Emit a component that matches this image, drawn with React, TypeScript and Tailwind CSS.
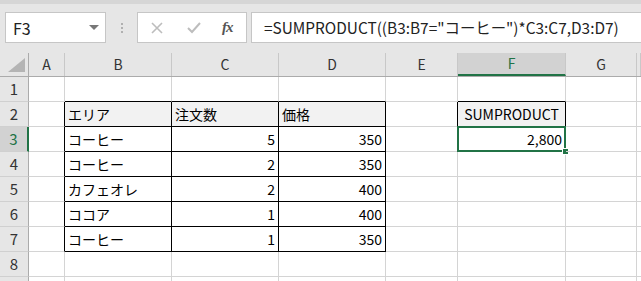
import React from 'react';

const cols = ['A', 'B', 'C', 'D', 'E', 'F', 'G', ''];
const widths = ['w-[36px]', 'w-[107px]', 'w-[107px]', 'w-[107px]', 'w-[72px]', 'w-[108px]', 'w-[71px]', 'flex-1'];

type Cell = { text?: string; align?: 'left' | 'right' | 'center'; head?: boolean; r?: boolean; b?: boolean };

// sheet content keyed by row then column index (0 = A)
const data: Record<number, Record<number, Cell>> = {
  1: { 1: { b: true }, 2: { b: true }, 3: { b: true }, 5: { b: true } },
  2: {
    0: { r: true },
    1: { text: 'エリア', head: true, r: true, b: true },
    2: { text: '注文数', head: true, r: true, b: true },
    3: { text: '価格', head: true, r: true, b: true },
    4: { r: true },
    5: { text: 'SUMPRODUCT', head: true, r: true, b: true, align: 'center' },
  },
  3: { 0: { r: true }, 1: { text: 'コーヒー', r: true, b: true }, 2: { text: '5', align: 'right', r: true, b: true }, 3: { text: '350', align: 'right', r: true, b: true }, 5: { text: '2,800', align: 'right' } },
  4: { 0: { r: true }, 1: { text: 'コーヒー', r: true, b: true }, 2: { text: '2', align: 'right', r: true, b: true }, 3: { text: '350', align: 'right', r: true, b: true } },
  5: { 0: { r: true }, 1: { text: 'カフェオレ', r: true, b: true }, 2: { text: '2', align: 'right', r: true, b: true }, 3: { text: '400', align: 'right', r: true, b: true } },
  6: { 0: { r: true }, 1: { text: 'ココア', r: true, b: true }, 2: { text: '1', align: 'right', r: true, b: true }, 3: { text: '400', align: 'right', r: true, b: true } },
  7: { 0: { r: true }, 1: { text: 'コーヒー', r: true, b: true }, 2: { text: '1', align: 'right', r: true, b: true }, 3: { text: '350', align: 'right', r: true, b: true } },
};

const justify = { left: 'justify-start', right: 'justify-end', center: 'justify-center' };

const font = { fontFamily: '"Noto Sans CJK JP", "Noto Sans", sans-serif' };

const Toolbar: React.FC = () => (
  <div className="h-[53px] bg-[#e6e6e6] border-t-4 border-[#d6d6d6] flex items-start pt-[8px] pl-[5px]">
    <div className="w-[101px] h-[31px] bg-white border border-[#c6c6c6] flex items-center justify-between pl-[7px] pr-[6px]">
      <span className="text-[16px] text-[#222]" style={font}>F3</span>
      <svg width="10" height="6" viewBox="0 0 10 6"><path d="M0 0 L10 0 L5 5 Z" fill="#777" /></svg>
    </div>
    <div className="w-[31px] h-[31px] flex flex-col items-center justify-center gap-[2px]">
      <span className="w-[2px] h-[2px] bg-[#b0b0b0]" />
      <span className="w-[2px] h-[2px] bg-[#b0b0b0]" />
      <span className="w-[2px] h-[2px] bg-[#b0b0b0]" />
    </div>
    <div className="w-[110px] h-[31px] bg-white border border-[#c6c6c6] flex items-center">
      <svg className="ml-[13px]" width="12" height="12" viewBox="0 0 12 12">
        <path d="M1 1 L11 11 M11 1 L1 11" stroke="#bdbdbd" strokeWidth="1.6" />
      </svg>
      <svg className="ml-[24px]" width="14" height="12" viewBox="0 0 14 12">
        <path d="M1 6 L5 10 L13 1" stroke="#bdbdbd" strokeWidth="2" fill="none" />
      </svg>
      <span
        className="ml-[21px] text-[15px] italic font-bold text-[#555] leading-none tracking-[-1px]"
        style={{ fontFamily: '"Liberation Serif", serif' }}
      >
        fx
      </span>
    </div>
    <div className="ml-[4px] flex-1 h-[31px] bg-white border border-[#c6c6c6] border-r-0 flex items-center pl-[12px]">
      <span className="text-[15.4px] text-[#222] whitespace-nowrap" style={font}>=SUMPRODUCT((B3:B7="コーヒー")*C3:C7,D3:D7)</span>
    </div>
  </div>
);

const App: React.FC = () => {
  return (
    <div className="w-[641px] h-[281px] overflow-hidden bg-white" style={font}>
      <Toolbar />
      {/* column header row */}
      <div className="flex h-[24px] bg-[#e6e6e6] border-b border-[#ababab]">
        <div className="w-[29px] shrink-0 border-r border-[#ababab] relative">
          <svg className="absolute left-[8px] top-[5px]" width="17" height="14" viewBox="0 0 17 14">
            <path d="M17 0 L17 14 L0 14 Z" fill="#b4b4b4" />
          </svg>
        </div>
        {cols.map((c, i) => (
          <div
            key={i}
            className={`${widths[i]} shrink-0 flex items-center justify-center text-[14px] border-r border-[#c8c8c8] ${
              c === 'F' ? 'bg-[#d2d2d2] text-[#217346] border-b-2 border-b-[#217346]' : 'text-[#333]'
            }`}
          >
            {c}
          </div>
        ))}
      </div>
      {[1, 2, 3, 4, 5, 6, 7, 8, 9].map((row) => (
        <div key={row} className={`flex h-[25px] ${row === 3 ? 'relative z-10' : ''}`}>
          <div
            className={`w-[29px] shrink-0 flex items-center justify-center text-[15px] border-b border-[#d0d0d0] ${
              row === 3
                ? 'bg-[#d2d2d2] text-[#217346] border-r-2 border-r-[#217346]'
                : 'bg-[#e6e6e6] text-[#333] border-r border-r-[#ababab]'
            }`}
          >
            {row < 9 ? row : ''}
          </div>
          {cols.map((_, i) => {
            const cell: Cell = data[row]?.[i] ?? {};
            return (
              <div
                key={i}
                className={`${widths[i]} shrink-0 relative flex items-center px-[3px] text-[14px] text-black border-r border-b ${
                  cell.r ? 'border-r-black' : 'border-r-[#d4d4d4]'
                } ${cell.b ? 'border-b-black' : 'border-b-[#d4d4d4]'} ${cell.head ? 'bg-[#f2f2f2]' : ''} ${
                  justify[cell.align ?? 'left']
                }`}
              >
                <span className="whitespace-nowrap">{cell.text}</span>
                {row === 3 && i === 5 && (
                  <>
                    <div className="absolute -left-[1px] -top-[1px] w-[109px] h-[26px] border-2 border-[#217346]" />
                    <div className="absolute right-[-4px] bottom-[-4px] w-[7px] h-[7px] bg-[#217346] border border-white" />
                  </>
                )}
              </div>
            );
          })}
        </div>
      ))}
    </div>
  );
};

export default App;
